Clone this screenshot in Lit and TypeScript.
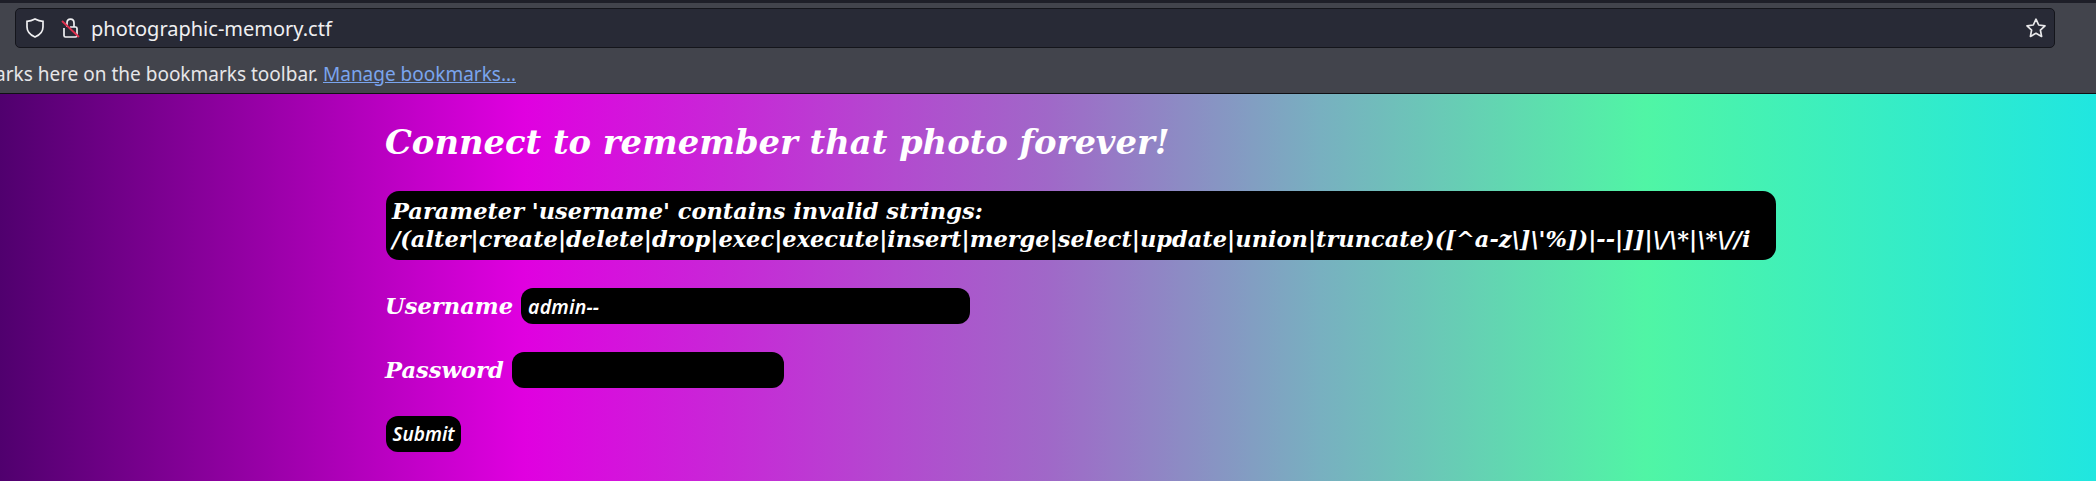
import { LitElement, html, css } from "lit";
import { customElement } from "lit/decorators.js";

@customElement("app-root")
export class AppRoot extends LitElement {
  static styles = css`
    :host { display: block; width: 2096px; height: 481px; overflow: hidden; font-family: "Noto Sans", sans-serif; }
    .chrome { height: 93px; background: #42444c; border-bottom: 1px solid #0f1014; display: flex; flex-direction: column; }
    .top { height: 3px; background: #1e1f28; flex: none; }
    .nav { height: 53px; flex: none; padding: 5px 41px 0 15px; box-sizing: border-box; }
    .url { height: 40px; box-sizing: border-box; background: #282a36; border: 1px solid #14151b; border-radius: 5px; display: flex; align-items: center; padding: 0 7px 0 9px; color: #f0f0f2; font-size: 20px; }
    .url svg { flex: none; display: block; }
    .shield { margin-right: 15px; }
    .lock { margin-right: 11px; }
    .host { flex: 1; }
    .bm { height: 37px; width: 516px; display: flex; justify-content: flex-end; align-items: center; overflow: hidden; white-space: nowrap; color: #e6e6e8; font-size: 19px; padding-bottom: 2px; box-sizing: border-box; }
    .bm a { color: #7aa5ee; text-decoration: underline; margin-left: 5px; }
    main { height: 387px; padding: 0 0 0 385px; box-sizing: border-box; color: #fff; font-family: "DejaVu Serif", serif; font-style: italic; font-weight: bold;
      background: linear-gradient(90deg, #50006e 0%, #e000e0 25%, #a068c8 50%, #78b0c0 63%, #50f5a5 78.5%, #20e6e0 100%); }
    h1 { margin: 0; padding-top: 29px; font-size: 33.77px; line-height: 38px; font-weight: bold; }
    .msg { margin-top: 30px; width: 1390px; box-sizing: border-box; margin-left: 1px; background: #000; border-radius: 13px; padding: 6px 6px; font-size: 22.5px; line-height: 28px; height: 69px; white-space: nowrap; }
    .row { display: flex; align-items: center; margin-top: 28px; font-size: 22.6px; height: 36px; }
    .row label { margin-right: 8px; }
    .in { height: 36px; background: #000; border-radius: 12px; box-sizing: border-box; padding-left: 7px; display: flex; align-items: center; font: italic 600 19.5px "Noto Sans", sans-serif; letter-spacing: 0.2px; }
    .u { width: 449px; }
    .p { width: 272px; }
    .sub { margin-top: 28px; margin-left: 1px; width: 75px; height: 36px; background: #000; border-radius: 12px; color: #fff; display: flex; align-items: center; justify-content: center; font: italic 600 19px "Noto Sans", sans-serif; }
  `;
  render() {
    return html`
      <div class="chrome">
        <div class="top"></div>
        <div class="nav">
          <div class="url">
            <svg class="shield" width="20" height="22" viewBox="0 0 20 22" fill="none" stroke="#f0f0f2" stroke-width="1.7"><path d="M10 2 C7 3.6 5 4.2 2 4.4 V10 C2 14.6 5.2 18 10 20 C14.8 18 18 14.6 18 10 V4.4 C15 4.2 13 3.6 10 2 Z"/></svg>
            <svg class="lock" width="20" height="22" viewBox="0 0 20 22" fill="none"><path d="M7 10 V6 C7 3.6 8.6 2.2 10.5 2.2 C12.4 2.2 14 3.6 14 6 V10" stroke="#f0f0f2" stroke-width="1.7"/><path d="M10 10 H15.5 Q17 10 17 11.5 V18.5 Q17 20 15.5 20 H5.5 Q4 20 4 18.5 V11" stroke="#f0f0f2" stroke-width="1.7"/><path d="M2 4 L19 20" stroke="#e0304e" stroke-width="1.8"/></svg>
            <span class="host">photographic-memory.ctf</span>
            <svg width="22" height="22" viewBox="0 0 22 22" fill="none" stroke="#e8e8ea" stroke-width="1.7" stroke-linejoin="round"><path d="M11 2.2 L13.7 8 L20 8.8 L15.4 13.1 L16.6 19.4 L11 16.3 L5.4 19.4 L6.6 13.1 L2 8.8 L8.3 8 Z"/></svg>
          </div>
        </div>
        <div class="bm"><span>For quick access, place your bookmarks here on the bookmarks toolbar.</span><a>Manage bookmarks…</a></div>
      </div>
      <main>
        <h1>Connect to remember that photo forever!</h1>
        <div class="msg">Parameter 'username' contains invalid strings:<br>/(alter|create|delete|drop|exec|execute|insert|merge|select|update|union|truncate)([^a-z\\]\\'%])|--|]]|\\/\\*|\\*\\//i</div>
        <div class="row"><label>Username</label><div class="in u">admin--</div></div>
        <div class="row"><label>Password</label><div class="in p"></div></div>
        <div class="sub">Submit</div>
      </main>
    `;
  }
}
